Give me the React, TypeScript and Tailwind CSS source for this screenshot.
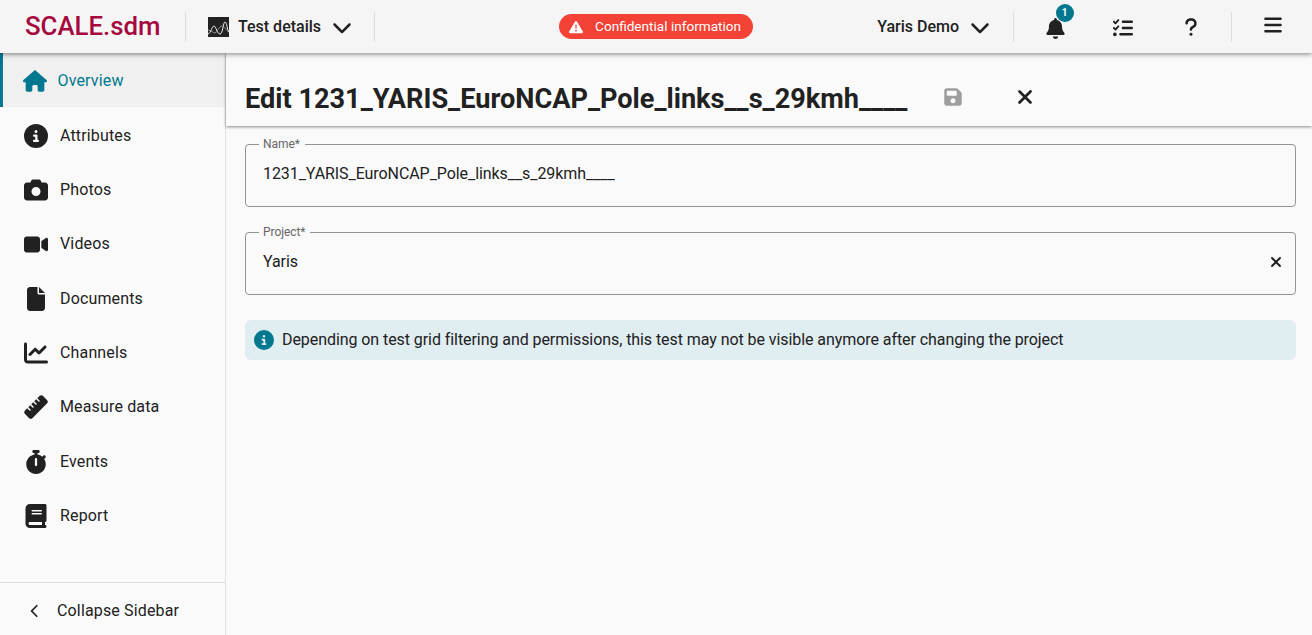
import type { ReactNode } from 'react';
import {
  FaBars,
  FaBell,
  FaBook,
  FaCamera,
  FaChartLine,
  FaChevronDown,
  FaChevronLeft,
  FaCircleInfo,
  FaFile,
  FaFloppyDisk,
  FaHouse,
  FaListCheck,
  FaQuestion,
  FaRuler,
  FaStopwatch,
  FaTriangleExclamation,
  FaVideo,
  FaXmark,
} from 'react-icons/fa6';

const NAV_ITEMS = [
  { label: 'Attributes', icon: <FaCircleInfo size={24} /> },
  { label: 'Photos', icon: <FaCamera size={24} /> },
  { label: 'Videos', icon: <FaVideo size={27} /> },
  { label: 'Documents', icon: <FaFile size={24} /> },
  { label: 'Channels', icon: <FaChartLine size={24} /> },
  { label: 'Measure data', icon: <FaRuler size={24} /> },
  { label: 'Events', icon: <FaStopwatch size={24} /> },
  { label: 'Report', icon: <FaBook size={24} /> },
];

function Divider() {
  return <div className="w-px h-[30px] bg-[#dcdcdc]" />;
}

function TestIcon() {
  return (
    <svg width="21" height="20" viewBox="0 0 21 20" className="block">
      <rect width="21" height="20" fill="#222" />
      <path d="M0 17C3 16 4 9 6 9s3 8 6 8 3-12 5-12 2 8 4 10" fill="none" stroke="#eee" strokeWidth="1" />
      <path d="M0 13c3 0 5 3 7 3s4-7 7-7 4 5 7 6" fill="none" stroke="#bbb" strokeWidth="0.7" />
    </svg>
  );
}

function Field({ label, children }: { label: string; children: ReactNode }) {
  return (
    <fieldset className="border border-[#949494] rounded-[4px] h-[70px] px-[17px] min-w-0">
      <legend className="ml-[-4px] pl-[4px] pr-[5px] text-[12px] leading-[14px] text-[#666]">{label}</legend>
      {children}
    </fieldset>
  );
}

export default function App() {
  return (
    <div className="h-[635px] w-[1312px] overflow-hidden flex flex-col bg-[#fafafa] text-[#212121] font-['Roboto',sans-serif] text-[16px]">
      <header className="relative z-20 h-[53px] shrink-0 flex items-center pr-[18px] bg-[#f5f5f5] shadow-[0_1px_5px_rgba(0,0,0,0.5)]">
        <div className="w-[185px] pl-[25px] text-[25.8px] font-medium leading-none text-[#a6093d] whitespace-nowrap">
          SCALE.sdm
        </div>
        <Divider />
        <div className="flex items-center w-[188px] pl-[22px]">
          <TestIcon />
          <span className="ml-[9px] font-medium">Test details</span>
          <FaChevronDown size={20} className="ml-[11px] mt-[1px]" />
        </div>
        <Divider />
        <div className="flex-1 flex justify-center pl-[60px]">
          <div className="flex items-center h-[25px] rounded-full bg-[#f44336] text-white text-[13.6px] pl-[10px] pr-[12px]">
            <FaTriangleExclamation size={14} />
            <span className="ml-[12px]">Confidential information</span>
          </div>
        </div>
        <span className="font-medium">Yaris Demo</span>
        <FaChevronDown size={20} className="ml-[11px] mt-[1px]" />
        <div className="ml-[23px]">
          <Divider />
        </div>
        <div className="ml-[7px] w-[68px] flex justify-center">
          <div className="relative mt-[3px]">
            <FaBell size={21} />
            <span className="absolute top-[-14px] left-[11px] w-[18px] h-[18px] rounded-full bg-[#00788f] text-white text-[10px] font-bold flex items-center justify-center">
              1
            </span>
          </div>
        </div>
        <div className="w-[68px] flex justify-center">
          <FaListCheck size={20} className="mt-[3px]" />
        </div>
        <div className="w-[68px] flex justify-center">
          <FaQuestion size={20} className="mt-[1px]" />
        </div>
        <div className="ml-[6px]">
          <Divider />
        </div>
        <div className="ml-[20px] w-[42px] flex justify-center">
          <FaBars size={20} className="mt-[-3px]" />
        </div>
      </header>

      <div className="flex-1 flex min-h-0">
        <aside className="w-[226px] shrink-0 flex flex-col border-r border-[#e0e0e0] bg-[#fafafa] tracking-[0.15px]">
          <div className="h-[54px] pt-[2px] mb-[0.5px] flex items-center bg-[#f0f0f0] border-l-[3px] border-[#00788f] text-[#00788f]">
            <span className="w-[24px] ml-[20px] flex justify-center">
              <FaHouse size={24} />
            </span>
            <span className="ml-[10.5px]">Overview</span>
          </div>
          {NAV_ITEMS.map((item) => (
            <div key={item.label} className="h-[54.33px] pt-[2px] flex items-center">
              <span className="w-[24px] ml-[24px] flex justify-center">{item.icon}</span>
              <span className="ml-[12px]">{item.label}</span>
            </div>
          ))}
          <div className="mt-auto h-[53px] pt-[4px] border-t border-[#dcdcdc] flex items-center">
            <FaChevronLeft size={14} className="ml-[27.5px]" />
            <span className="ml-[15.5px]">Collapse Sidebar</span>
          </div>
        </aside>

        <main className="flex-1 min-w-0 flex flex-col">
          <div className="relative z-10 h-[73px] shrink-0 flex items-center pl-[19px] pt-[21px] bg-[#fafafa] shadow-[0_1px_3px_rgba(0,0,0,0.45)]">
            <h1 className="text-[27.15px] leading-none font-bold whitespace-nowrap">
              Edit 1231_YARIS_EuroNCAP_Pole_links__s_29kmh____
            </h1>
            <FaFloppyDisk size={20} className="ml-[36px] mt-[-6px] text-[#9e9e9e]" />
            <FaXmark size={22} className="ml-[51px] mt-[-6px]" />
          </div>
          <div className="flex flex-col pt-[11px] pl-[19px] pr-[16px] tracking-[-0.07px]">
            <Field label="Name*">
              <div className="pt-[11px] leading-[24px]">1231_YARIS_EuroNCAP_Pole_links__s_29kmh____</div>
            </Field>
            <div className="mt-[18px]">
              <Field label="Project*">
                <div className="pt-[11px] leading-[24px] flex items-center justify-between">
                  <span>Yaris</span>
                  <FaXmark size={16} className="mr-[-6px]" />
                </div>
              </Field>
            </div>
            <div className="mt-[25px] h-[40px] rounded-[6px] bg-[#e0edf1] flex items-center pl-[9px]">
              <FaCircleInfo size={20} className="text-[#00788f]" />
              <span className="ml-[8px]">
                Depending on test grid filtering and permissions, this test may not be visible anymore after changing the project
              </span>
            </div>
          </div>
        </main>
      </div>
    </div>
  );
}
